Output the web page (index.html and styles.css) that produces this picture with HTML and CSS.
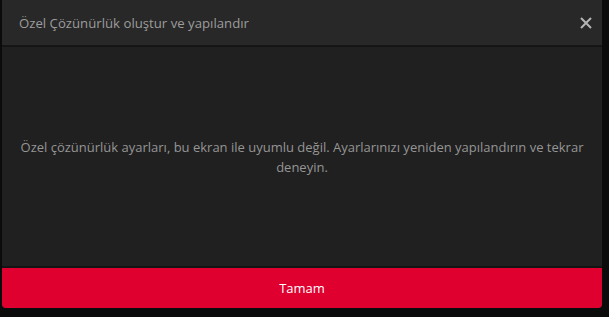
FILE: index.html
```html
<!DOCTYPE html>
<html>
<head>
    <meta charset="UTF-8">
    <title>Özel Çözünürlük</title>
    <link rel="stylesheet" href="styles.css">
</head>
<body>
    <div class="dialog">
        <div class="dialog-header">
            <span class="dialog-title">Özel Çözünürlük oluştur ve yapılandır</span>
            <button class="close-btn" aria-label="Kapat">
                <svg width="12" height="12" viewBox="0 0 12 12">
                    <path d="M1 1 L11 11 M11 1 L1 11" stroke="#b4b4b4" stroke-width="2"/>
                </svg>
            </button>
        </div>

        <div class="dialog-body">
            <p class="message">Özel çözünürlük ayarları, bu ekran ile uyumlu değil. Ayarlarınızı yeniden yapılandırın ve tekrar deneyin.</p>
        </div>

        <button class="ok-btn">Tamam</button>
    </div>
</body>
</html>
```

FILE: styles.css
```css
body {
    margin: 0;
    padding: 0 2px;
    background-color: #0b0b0b;
    font-family: 'Open Sans', 'Noto Sans', sans-serif;
    font-size: 13px;
}

.dialog {
    width: 600px;
    display: flex;
    flex-direction: column;
    background-color: #202020;
    border-radius: 0 0 4px 4px;
}

.dialog-header {
    height: 45px;
    display: flex;
    align-items: center;
    justify-content: space-between;
    padding: 0 6px 0 17px;
    background-color: #282828;
    border-bottom: 2px solid #151515;
}

.dialog-title {
    color: #9c9c9c;
    font-size: 13.2px;
}

.close-btn {
    background: none;
    border: none;
    padding: 4px;
    display: flex;
    cursor: pointer;
}

.dialog-body {
    height: 219px;
    display: flex;
    align-items: center;
    justify-content: center;
    padding: 0 18px;
    border-bottom: 2px solid #141414;
}

.message {
    margin: 0;
    text-align: center;
    line-height: 20px;
    color: #959595;
}

.ok-btn {
    height: 40px;
    border: none;
    border-radius: 0 0 4px 4px;
    background-color: #e00030;
    color: #fff;
    font-family: inherit;
    font-size: 13px;
    cursor: pointer;
}
```
